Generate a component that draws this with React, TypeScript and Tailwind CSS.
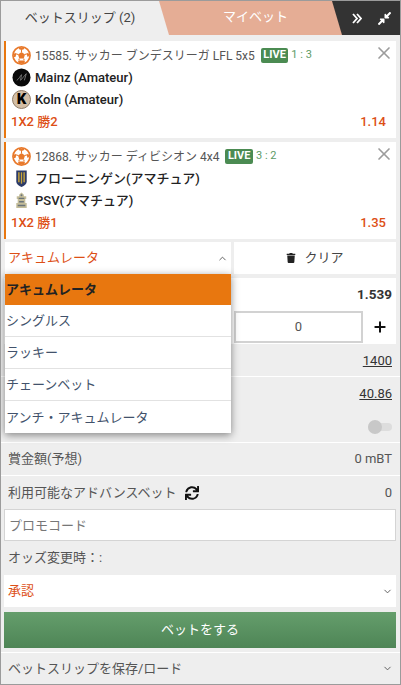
import { ChevronDown, ChevronUp, Plus, X } from 'lucide-react';
import { FaCompressAlt, FaSync, FaTrash } from 'react-icons/fa';

const BallIcon = () => (
  <svg width="19" height="19" viewBox="0 0 20 20" className="shrink-0">
    <circle cx="10" cy="10" r="9" fill="#fff" stroke="#e8792b" strokeWidth="1.800" />
    <path d="M10 6.200l3.700 2.700-1.400 4.300H7.700L6.300 8.900z" fill="#e8792b" />
    <path d="M7 1.800h6L12.500 3.400 10 4.200l-2.500-.8zM1.800 8.500l2-1.500.6 2-.8 2.700L2 11.500zM18.200 8.500l-2-1.500-.6 2 .8 2.700 1.600-1.200zM6 17l1.200-1.800h5.600L14 17l-2.500 1.300h-3z" fill="#e8792b" />
    <path d="M10 6.200V4M13.700 8.900l2-.7M12.300 13.200l.6 2M7.700 13.200l-.6 2M6.300 8.900l-2-.7" stroke="#e8792b" strokeWidth="1.100" />
  </svg>
);

const MainzIcon = () => (
  <svg width="19" height="19" viewBox="0 0 20 20" className="shrink-0">
    <circle cx="10" cy="10" r="9.500" fill="#0a0a0a" />
    <path d="M5 13c2-1 4-5 5-6l-1 6c2-2 4-5 6-7l-2 7" fill="none" stroke="#8d8d8d" strokeWidth="0.800" />
  </svg>
);

const KolnIcon = () => (
  <span className="flex h-[19px] w-[19px] shrink-0 items-center justify-center rounded-full border border-[#8f7c68] bg-[#d3bea5] text-[15px] leading-none font-black text-black">
    K
  </span>
);

const GroningenIcon = () => (
  <svg width="19" height="19" viewBox="0 0 20 20" className="shrink-0">
    <path d="M4.500 1.500h11v12c0 2.500-2.500 4-5.500 5.500-3-1.500-5.500-3-5.500-5.500z" fill="#2b3a68" />
    <path d="M6.500 3.500H8V14H6.500zM12 3.500h1.500V14H12z" fill="#c9a53a" />
    <path d="M9.300 3.500h1.400V15.500H9.300z" fill="#c9a53a" />
  </svg>
);

const PsvIcon = () => (
  <svg width="19" height="19" viewBox="0 0 20 20" className="shrink-0">
    <path d="M10 1.500l2.500 2.500v1.500h2.500v3h-1v4h1.500V18h-11v-5.500H6v-4H5v-3h2.500V4z" fill="#c4bd9a" />
    <path d="M7 7h6v1.500H7zM7.500 10.500h5V12h-5zM6 14.500h8V16H6z" fill="#6a747a" />
    <circle cx="10" cy="4.500" r="1" fill="#6a747a" />
  </svg>
);

function BetCard(props: {
  title: string;
  score: string;
  home: string;
  away: string;
  homeIcon: React.ReactNode;
  awayIcon: React.ReactNode;
  pick: string;
  odds: string;
}) {
  return (
    <div className="flex h-[97px] flex-col border-l-2 border-[#e8770f] bg-white pt-[3.500px] pr-[12px] pl-[6px]">
      <div className="flex h-[22px] shrink-0 items-center">
        <BallIcon />
        <span className="ml-[4px] text-[12px] whitespace-nowrap text-[#555]">{props.title}</span>
        <span className="ml-[6px] flex h-[15px] items-center rounded-[2px] bg-[#4b8b52] px-[2.500px] text-[11px] font-bold text-white">LIVE</span>
        <span className="ml-[3px] text-[11px] text-[#5d9b66]">{props.score}</span>
        <X size={20} strokeWidth={2} className="ml-auto -mr-[10px] -mt-[6px] text-[#9c9c9c]" />
      </div>
      <div className="flex h-[22px] shrink-0 items-center gap-[4px] text-[13px] font-medium text-[#222]">
        {props.homeIcon}
        <span className="whitespace-nowrap">{props.home}</span>
      </div>
      <div className="flex h-[22px] shrink-0 items-center gap-[4px] text-[13px] font-medium text-[#222]">
        {props.awayIcon}
        <span className="whitespace-nowrap">{props.away}</span>
      </div>
      <div className="-ml-[1px] flex h-[23px] items-center justify-between text-[13px] font-medium text-[#dd4f16]">
        <span>{props.pick}</span>
        <span className="mr-[-2px]">{props.odds}</span>
      </div>
    </div>
  );
}

const menuItems = ['シングルス', 'ラッキー', 'チェーンベット', 'アンチ・アキュムレータ'];

export default function App() {
  return (
    <div className="flex h-[685px] w-[401px] flex-col overflow-hidden border border-[#9b9b9b] bg-[#eeeeee] font-['Roboto','Noto_Sans_CJK_JP',sans-serif] text-[#555]">
      {/* Tabs */}
      <header className="flex h-[34px] shrink-0 bg-[#333333]">
        <div className="relative flex w-[341px] shrink-0 bg-[#e5ad95] [clip-path:polygon(0_0,331px_0,341px_100%,0_100%)]">
          <div className="flex w-[168px] shrink-0 items-center justify-center bg-[#eeeeee] pr-[10px] text-[13px] text-[#444] [clip-path:polygon(0_0,158px_0,168px_100%,0_100%)]">
            ベットスリップ&nbsp;<span className="text-[13px]">(2)</span>
          </div>
          <div className="flex flex-1 items-center justify-center pb-[2px] text-[13px] text-white">マイベット</div>
        </div>
        <div className="flex flex-1 items-center justify-between pr-[8px] pl-[10px]">
          <svg width="10" height="11" viewBox="0 0 10 11" fill="none" stroke="#fff" strokeWidth="1.800">
            <path d="M1 1l4 4.500-4 4.500M5 1l4 4.500-4 4.500" />
          </svg>
          <FaCompressAlt size={15} className="text-white" />
        </div>
      </header>

      {/* Bet cards */}
      <div className="flex flex-col gap-[4px] pt-[6px] pr-[4px] pl-[3px]">
        <BetCard
          title="15585. サッカー ブンデスリーガ LFL 5x5"
          score="1 : 3"
          home="Mainz (Amateur)"
          away="Koln (Amateur)"
          homeIcon={<MainzIcon />}
          awayIcon={<KolnIcon />}
          pick="1X2 勝2"
          odds="1.14"
        />
        <BetCard
          title="12868. サッカー ディビシオン 4x4"
          score="3 : 2"
          home="フローニンゲン(アマチュア)"
          away="PSV(アマチュア)"
          homeIcon={<GroningenIcon />}
          awayIcon={<PsvIcon />}
          pick="1X2 勝1"
          odds="1.35"
        />
      </div>

      {/* Bet type and stake */}
      <div className="relative mt-[3px] flex flex-1 flex-col">
        <div className="flex h-[32px] gap-[3px] pr-[4px] pl-[4px]">
          <div className="flex w-[226px] items-center justify-between bg-white pr-[3px] pl-[3px] text-[13px] text-[#dd4f16]">
            アキュムレータ
            <ChevronUp size={11} className="text-[#555]" />
          </div>
          <div className="flex flex-1 items-center justify-center gap-[8px] bg-white text-[13px] text-[#444]">
            <FaTrash size={10} className="text-[#222]" />
            クリア
          </div>
        </div>

        <div className="mt-[4px] mr-[4px] ml-[3px] flex h-[32px] items-center justify-end bg-white pr-[4px] text-[13.500px] font-bold text-[#333]">1.539</div>
        <div className="mr-[4px] ml-[3px] flex h-[34px] items-center justify-end bg-white">
          <div className="flex h-[32px] w-[129px] items-center justify-center border-2 border-[#d2d2d2] text-[13px] text-[#555]">0</div>
          <div className="flex w-[33px] items-center justify-center">
            <Plus size={16} strokeWidth={3} className="text-[#111]" />
          </div>
        </div>

        <div className="flex h-[33px] items-center justify-end border-b border-white pt-[1px] pr-[8px] text-[13px] text-[#333] underline">1400</div>
        <div className="flex h-[33px] items-center justify-end pt-[1px] pr-[8px] text-[13px] text-[#333] underline">40.86</div>
        <div className="flex h-[33px] items-center justify-end border-b border-white pt-[1px] pr-[8px]">
          <div className="relative h-[8px] w-[24px] rounded-full bg-[#dddddd]">
            <div className="absolute top-[-3px] left-0 h-[14px] w-[14px] rounded-full bg-[#c8c8c8]" />
          </div>
        </div>
        <div className="flex h-[33px] items-center justify-between border-b border-white pr-[8px] pl-[7px] text-[13px]">
          <span>賞金額(予想)</span>
          <span>0 mBT</span>
        </div>
        <div className="flex h-[33px] items-center justify-between pr-[8px] pl-[7px] text-[13px]">
          <span className="flex items-center gap-[9px]">
            利用可能なアドバンスベット
            <FaSync size={14} className="text-[#111]" />
          </span>
          <span>0</span>
        </div>
        <div className="mr-[4px] ml-[3px] flex h-[32px] items-center border border-[#d4d4d4] bg-white pt-[1px] pl-[4px] text-[13px] text-[#777]">プロモコード</div>
        <div className="flex h-[34px] items-center pl-[7px] text-[13px]">オッズ変更時：:</div>
        <div className="mr-[4px] ml-[3px] flex h-[32px] items-center justify-between bg-white pr-[3px] pl-[4px] text-[13px] text-[#dd4f16]">
          承認
          <ChevronDown size={11} className="text-[#555]" />
        </div>
        <button className="mt-[5px] mr-[4px] ml-[3px] flex h-[36px] items-center justify-center bg-gradient-to-b from-[#659e6c] to-[#4e8556] text-[13px] text-white">ベットをする</button>
        <div className="mt-[4px] flex flex-1 items-center justify-between border-t border-white pr-[7px] pl-[7px] text-[13px]">
          ベットスリップを保存/ロード
          <ChevronDown size={11} className="text-[#555]" />
        </div>

        {/* Open dropdown */}
        <div className="absolute top-[32px] left-[4px] w-[226px] bg-white shadow-[0_2px_8px_rgba(0,0,0,0.45)]">
          <div className="flex h-[31px] items-center bg-[#e8770f] pt-[1px] pl-[1px] text-[13px] font-bold text-[#222]">アキュムレータ</div>
          {menuItems.map((item, i) => (
            <div key={item} className={`flex h-[32px] items-center pt-[1px] pl-[1px] text-[13px] text-[#42526b] ${i < 3 ? 'border-b border-[#e2e2e2]' : ''}`}>
              {item}
            </div>
          ))}
        </div>
      </div>
    </div>
  );
}
